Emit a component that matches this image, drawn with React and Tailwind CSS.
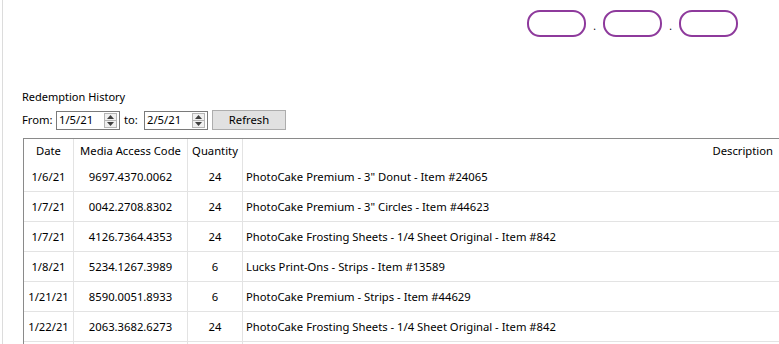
import React from 'react'

const rows = [
  ['1/6/21', '9697.4370.0062', '24', 'PhotoCake Premium - 3" Donut - Item #24065'],
  ['1/7/21', '0042.2708.8302', '24', 'PhotoCake Premium - 3" Circles - Item #44623'],
  ['1/7/21', '4126.7364.4353', '24', 'PhotoCake Frosting Sheets - 1/4 Sheet Original - Item #842'],
  ['1/8/21', '5234.1267.3989', '6', 'Lucks Print-Ons - Strips - Item #13589'],
  ['1/21/21', '8590.0051.8933', '6', 'PhotoCake Premium - Strips - Item #44629'],
  ['1/22/21', '2063.3682.6273', '24', 'PhotoCake Frosting Sheets - 1/4 Sheet Original - Item #842'],
  ['', '', '', ''],
]

const cols = 'grid grid-cols-[50px_114px_55px_1fr]'

function Spinner() {
  return (
    <div className="flex flex-col w-[13px] h-[15px] border border-[#b5b5b5] bg-[#f0f0f0]">
      <div className="flex-1 flex items-center justify-center border-b border-[#b5b5b5]">
        <svg width="7" height="4" viewBox="0 0 7 4"><path d="M0 4 L3.5 0 L7 4 Z" fill="#404040" /></svg>
      </div>
      <div className="flex-1 flex items-center justify-center">
        <svg width="7" height="4" viewBox="0 0 7 4"><path d="M0 0 L3.5 4 L7 0 Z" fill="#404040" /></svg>
      </div>
    </div>
  )
}

function DateBox({ value }) {
  return (
    <div className="w-[64px] h-[19px] border border-[#7a7a7a] bg-white flex items-center justify-between pl-[2px] pr-[2px]">
      <span>{value}</span>
      <Spinner />
    </div>
  )
}

function Pill() {
  return <div className="w-[59px] h-[27px] rounded-[13px] border-2 border-[#8e3a9c] bg-white" />
}

export default function App() {
  return (
    <div className="w-[779px] h-[344px] overflow-hidden bg-white text-black text-[11.25px] leading-none" style={{ fontFamily: '"Noto Sans", "Liberation Sans", sans-serif' }}>
      <div className="h-full ml-[2px] border-l border-[#dcdcdc] flex flex-col">
        <div className="flex items-center pl-[524px] pt-[10px] h-[38px]">
          <Pill />
          <span className="w-[17px] text-center text-[10px] pt-[4px]">.</span>
          <Pill />
          <span className="w-[17px] text-center text-[10px] pt-[4px]">.</span>
          <Pill />
        </div>
        <div className="pl-[19px] mt-[54px] text-[11px]">Redemption History</div>
        <div className="flex items-center pl-[19px] mt-[8px] gap-[3px]">
          <span className="w-[31px]">From:</span>
          <DateBox value="1/5/21" />
          <span className="ml-[1px] w-[17px]">to:</span>
          <DateBox value="2/5/21" />
          <button className="ml-[1px] w-[74px] h-[20px] bg-[#e1e1e1] border border-[#adadad]">Refresh</button>
        </div>
        <div className="ml-[20px] mt-[8px] flex-1 border-l border-t border-[#8a8a8a]">
          <div className={`${cols} h-[23px]`}>
            <div className="flex items-center justify-center border-r border-[#e3e3e3]">Date</div>
            <div className="flex items-center justify-center border-r border-[#e3e3e3]">Media Access Code</div>
            <div className="flex items-center justify-center border-r border-[#e3e3e3]">Quantity</div>
            <div className="flex items-center justify-end pr-[6px]">Description</div>
          </div>
          {rows.map((r, i) => (
            <div key={i} className={`${cols} h-[30px] border-b border-[#e3e3e3]`}>
              <div className="flex items-center justify-center border-r border-[#e3e3e3]">{r[0]}</div>
              <div className="flex items-center justify-center border-r border-[#e3e3e3]">{r[1]}</div>
              <div className="flex items-center justify-center border-r border-[#e3e3e3]">{r[2]}</div>
              <div className="flex items-center pl-[3px]">{r[3]}</div>
            </div>
          ))}
        </div>
      </div>
    </div>
  )
}
